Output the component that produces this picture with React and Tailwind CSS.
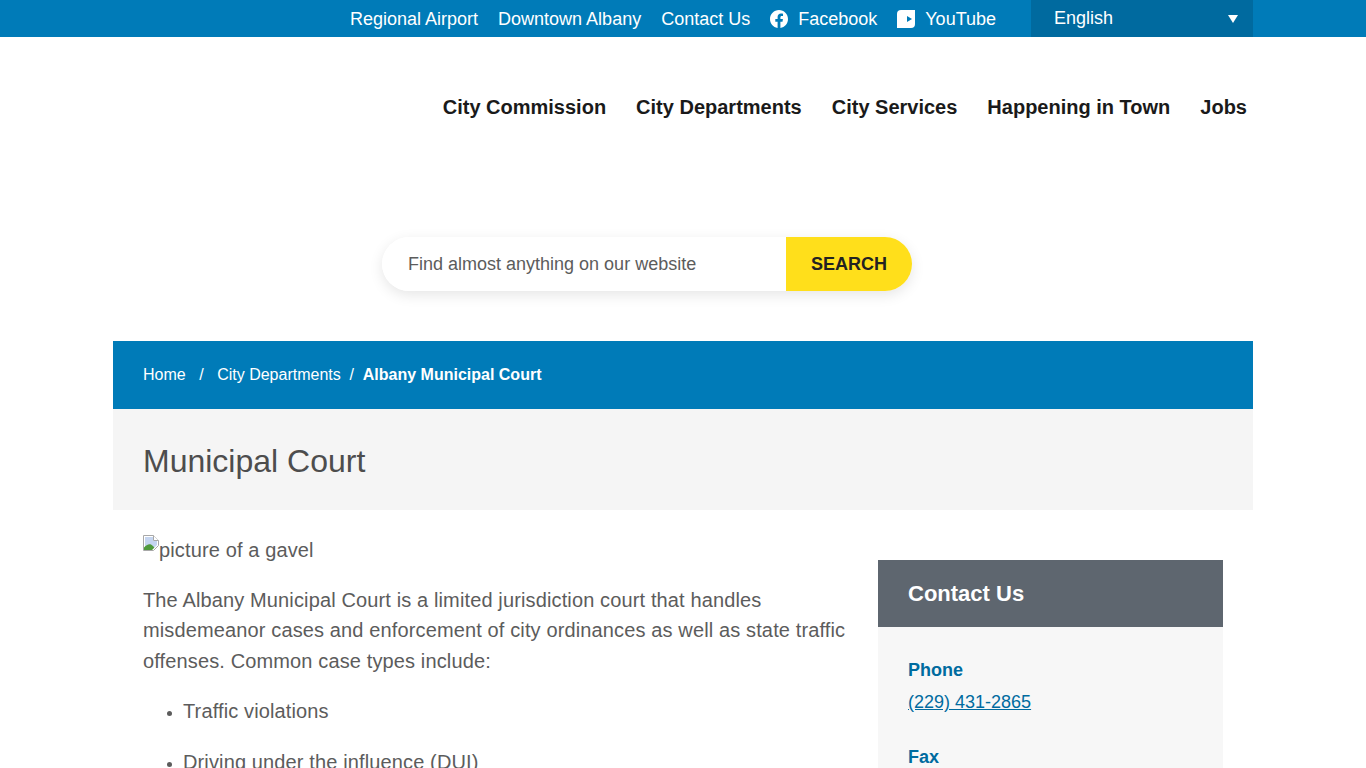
import React from "react";

function Fb() {
  return (
    <svg viewBox="0 0 24 24" className="w-[18px] h-[18px] mr-[10px] mb-[2px]" fill="#fff">
      <path d="M24 12.07C24 5.4 18.63 0 12 0S0 5.4 0 12.07c0 6.03 4.39 11.02 10.13 11.93v-8.44H7.08v-3.49h3.05V9.41c0-3.02 1.79-4.69 4.53-4.69 1.31 0 2.69.24 2.69.24v2.97h-1.51c-1.49 0-1.96.93-1.96 1.89v2.25h3.33l-.53 3.49h-2.8V24C19.61 23.09 24 18.1 24 12.07z" />
    </svg>
  );
}

function Yt() {
  return (
    <svg viewBox="0 0 18 18" className="w-[18px] h-[18px] mr-[10px] mb-[2px]">
      <path fill="#fff" d="M4 0h14v14a4 4 0 0 1-4 4H0V4a4 4 0 0 1 4-4z" />
      <path fill="#007bb8" d="M10 6l5 3-5 3z" />
    </svg>
  );
}

function BrokenImg() {
  return (
    <svg viewBox="0 0 16 16" className="w-4 h-4 shrink-0">
      <path fill="#fff" stroke="#a8a8a8" strokeWidth="1" d="M.5.5h10l5 5v5l-5 5H.5z" />
      <path fill="#c5d5f0" d="M2 2h8v4h4v4l-2 2H2z" />
      <path fill="#4f9a3c" d="M1 15v-2.5C3 10 6 8.5 8 9.5c1.5.8 2.5 2 3.5 3L9 15z" />
      <path fill="#fff" stroke="#a8a8a8" strokeWidth="1" d="M10.5.5v5h5" />
    </svg>
  );
}

export default function App() {
  return (
    <div className="h-screen overflow-hidden bg-white font-['Liberation_Sans',Arial,sans-serif] text-[#555]">
      <div className="bg-[#007bb8] h-[37px]">
        <div className="w-[1140px] mx-auto flex justify-end text-white text-[18px] h-[37px]">
          <div className="flex items-center h-[37px] leading-[37px] pt-[2px]">
            <a className="mr-5">Regional Airport</a>
            <a className="mr-5">Downtown Albany</a>
            <a className="mr-5">Contact Us</a>
            <a className="mr-5 flex items-center"><Fb />Facebook</a>
            <a className="flex items-center"><Yt />YouTube</a>
          </div>
          <div className="ml-[35px] w-[222px] h-[37px] bg-[#006a9f] flex items-center justify-between pl-[23px] pr-[15px]">
            <span className="mb-[1px]">English</span>
            <span className="w-0 h-0 border-l-[5px] border-r-[5px] border-t-[8px] border-l-transparent border-r-transparent border-t-white mt-[1px]"></span>
          </div>
        </div>
      </div>

      <div className="w-[1140px] mx-auto">
        <nav className="flex justify-end gap-[30px] pr-[6px] pt-[57px] text-[20px] leading-[26px] font-bold text-[#1a1a1a]">
          <a>City Commission</a>
          <a>City Departments</a>
          <a>City Services</a>
          <a>Happening in Town</a>
          <a>Jobs</a>
        </nav>

        <div className="mt-[117px] ml-[269px] w-[530px] h-[54px] flex rounded-[27px] shadow-[0_4px_14px_rgba(0,0,0,0.1)]">
          <div className="w-[404px] bg-white rounded-l-[27px] pl-[26px] flex items-center text-[18px] text-[#5c5c5c]">Find almost anything on our website</div>
          <div className="w-[126px] bg-[#ffdf1b] rounded-r-[27px] flex items-center justify-center font-bold text-[18px] text-[#222]">SEARCH</div>
        </div>

        <div className="mt-[50px] h-[68px] bg-[#007bb8] text-white flex items-center pl-[30px] text-[16px]">
          <a>Home</a>
          <span className="mx-[13.5px]">/</span>
          <a>City Departments</a>
          <span className="mx-[8.8px]">/</span>
          <b>Albany Municipal Court</b>
        </div>

        <div className="h-[101px] bg-[#f5f5f5] flex items-center pl-[30px] pt-[2px]">
          <h1 className="text-[32px] text-[#4d4d4d] font-normal">Municipal Court</h1>
        </div>

        <div className="flex pl-[30px] pr-[30px] text-[20px] leading-[30.4px] text-[#5c5c5c]">
          <div className="w-[705px] pt-[25px] tracking-[0.13px]">
            <div className="flex items-start h-[30px] leading-[30px]">
              <BrokenImg />
              <span>picture of a gavel</span>
            </div>
            <p className="mt-[20px]">The Albany Municipal Court is a limited jurisdiction court that handles misdemeanor cases and enforcement of city ordinances as well as state traffic offenses. Common case types include:</p>
            <ul className="list-disc pl-[40px] mt-[20px] marker:text-[16px]">
              <li>Traffic violations</li>
              <li className="mt-[20px]">Driving under the influence (DUI)</li>
            </ul>
          </div>
          <aside className="ml-[30px] w-[345px] mt-[50px]">
            <div className="h-[67px] bg-[#5e666f] text-white font-bold text-[22px] flex items-center pl-[30px] pt-[1px]">Contact Us</div>
            <div className="bg-[#f7f7f7] pl-[30px] pt-[27px] pb-10 text-[18px]">
              <div className="font-bold text-[#006b9f] leading-[32px]">Phone</div>
              <a className="underline text-[#006b9f] leading-[32px] block">(229) 431-2865</a>
              <div className="font-bold text-[#006b9f] leading-[32px] mt-[23px]">Fax</div>
            </div>
          </aside>
        </div>
      </div>
    </div>
  );
}
